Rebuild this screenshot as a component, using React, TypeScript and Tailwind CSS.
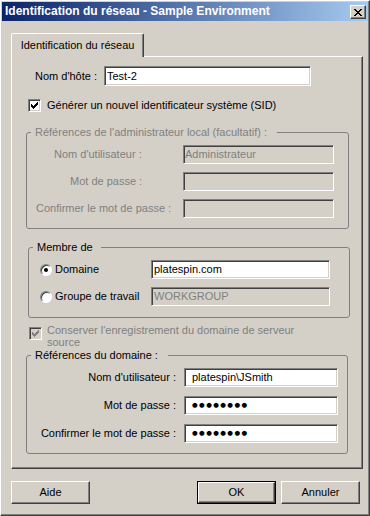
import React from "react";

function Field({ className, children, disabled }: { className: string; children?: React.ReactNode; disabled?: boolean }) {
  return (
    <div
      className={`flex items-center h-[19px] border border-t-[#808080] border-l-[#808080] border-b-white border-r-white shadow-[inset_1px_1px_0_#404040,inset_-1px_-1px_0_#d4d0c8] whitespace-nowrap overflow-hidden ${
        disabled ? "bg-[#d4d0c8] text-[#808080]" : "bg-white text-black"
      } ${className}`}
    >
      {children}
    </div>
  );
}

function Dots() {
  return <span className="font-['DejaVu_Sans',sans-serif] text-[6.5px] tracking-[1.4px] leading-[13px]">●●●●●●●●</span>;
}

function Check({ disabled }: { disabled?: boolean }) {
  return (
    <div
      className={`w-[13px] h-[13px] shrink-0 border border-t-[#808080] border-l-[#808080] border-b-white border-r-white shadow-[inset_1px_1px_0_#404040,inset_-1px_-1px_0_#d4d0c8] flex items-center justify-center ${
        disabled ? "bg-[#d4d0c8]" : "bg-white"
      }`}
    >
      <svg width="7" height="7" viewBox="0 0 7 7" shapeRendering="crispEdges">
        <path
          d="M6 0h1v1H6z M5 1h2v1H5z M0 2h1v1H0z M4 2h3v1H4z M0 3h2v1H0z M3 3h3v1H3z M0 4h5v1H0z M1 5h3v1H1z M2 6h1v1H2z"
          fill={disabled ? "#808080" : "#000"}
        />
      </svg>
    </div>
  );
}

function Radio({ checked }: { checked?: boolean }) {
  return (
    <div className="w-[12px] h-[12px] shrink-0 rounded-full bg-white border border-t-[#808080] border-l-[#808080] border-b-white border-r-white shadow-[inset_1px_1px_0_#404040] flex items-center justify-center">
      {checked && <div className="w-[4px] h-[4px] rounded-full bg-black" />}
    </div>
  );
}

function Btn({ children, def, className }: { children: React.ReactNode; def?: boolean; className: string }) {
  if (def) {
    return (
      <div className={`w-[79px] h-[23px] border border-black flex ${className}`}>
        <div className="flex-1 flex items-center justify-center border border-t-white border-l-white border-b-[#404040] border-r-[#404040] shadow-[inset_-1px_-1px_0_#808080]">
          {children}
        </div>
      </div>
    );
  }
  return (
    <div
      className={`w-[79px] h-[23px] flex items-center justify-center border border-t-white border-l-white border-b-[#404040] border-r-[#404040] shadow-[inset_-1px_-1px_0_#808080] ${className}`}
    >
      {children}
    </div>
  );
}

export default function App() {
  return (
    <div className="w-[370px] h-[516px] bg-[#d4d0c8] border-t border-l border-t-white border-l-white border-r border-b border-r-[#404040] border-b-[#404040] shadow-[inset_-1px_-1px_0_#808080] p-[1px] flex flex-col font-['Liberation_Sans',Arial,sans-serif] text-[11px] leading-[13px] text-black overflow-hidden">
      {/* Title bar */}
      <div className="h-[19px] shrink-0 flex items-start bg-[linear-gradient(to_right,#0a246a,#a6caf0)] pl-[3px] pr-[2px]">
        <span className="flex-1 text-white font-bold text-[12px] leading-[19px] whitespace-nowrap">
          Identification du réseau - Sample Environment
        </span>
        <div className="mt-[3px] w-[16px] h-[14px] bg-[#d4d0c8] flex items-center justify-center border border-t-white border-l-white border-b-[#404040] border-r-[#404040] shadow-[inset_-1px_-1px_0_#808080]">
          <svg width="8" height="7" viewBox="0 0 8 7" shapeRendering="crispEdges">
            <path
              d="M0 0h2v1H0z M6 0h2v1H6z M1 1h2v1H1z M5 1h2v1H5z M2 2h4v1H2z M3 3h2v1H3z M2 4h4v1H2z M1 5h2v1H1z M5 5h2v1H5z M0 6h2v1H0z M6 6h2v1H6z"
              fill="#000"
            />
          </svg>
        </div>
      </div>

      {/* Tab */}
      <div className="mt-[12px] ml-[9px] flex">
        <div className="relative z-10 -mb-[1px] w-[133px] h-[24px] bg-[#d4d0c8] border-t border-l border-t-white border-l-white border-r border-r-[#404040] shadow-[inset_-1px_0_0_#808080] rounded-tl-[2px] rounded-tr-[2px] flex items-center justify-center pb-[1px]">
          Identification du réseau
        </div>
      </div>

      {/* Panel */}
      <div className="ml-[9px] w-[352px] h-[413px] shrink-0 border-t border-l border-t-white border-l-white border-r border-b border-r-[#404040] border-b-[#404040] shadow-[inset_-1px_-1px_0_#808080] flex flex-col">
        {/* Hostname */}
        <div className="mt-[9px] flex items-center">
          <span className="ml-[23px] w-[69px]">Nom d'hôte :</span>
          <Field className="w-[207px] h-[20px] pl-[2px]">Test-2</Field>
        </div>

        {/* SID */}
        <div className="mt-[13px] ml-[16px] flex items-center">
          <Check />
          <span className="ml-[6px]">Générer un nouvel identificateur système (SID)</span>
        </div>

        {/* Admin group */}
        <fieldset className="mt-[14px] ml-[14px] w-[323px] border border-[#808080] rounded-[3px] pb-[10px] p-0">
          <legend className="ml-[4px] pl-[4px] pr-[10px] leading-[13px] text-[#808080]">
            Références de l'administrateur local (facultatif) :
          </legend>
          <div className="mt-[6px] flex flex-col gap-[8px] text-[#808080]">
            <div className="flex items-center">
              <span className="w-[156px] pl-[27px]">Nom d'utilisateur :</span>
              <Field disabled className="w-[151px] pl-[1px]">Administrateur</Field>
            </div>
            <div className="flex items-center">
              <span className="w-[156px] pl-[43px]">Mot de passe :</span>
              <Field disabled className="w-[151px]" />
            </div>
            <div className="flex items-center">
              <span className="w-[156px] pl-[9px]">Confirmer le mot de passe :</span>
              <Field disabled className="w-[151px]" />
            </div>
          </div>
        </fieldset>

        {/* Membre de */}
        <fieldset className="mt-[12px] ml-[16px] w-[322px] border border-[#808080] rounded-[3px] p-0 pb-[11px]">
          <legend className="ml-[4px] pl-[4px] pr-[8px] leading-[13px]">Membre de</legend>
          <div className="mt-[6px] flex flex-col gap-[8px]">
            <div className="flex items-center">
              <div className="w-[122px] pl-[11px] flex items-center">
                <Radio checked />
                <span className="ml-[3px]">Domaine</span>
              </div>
              <Field className="w-[179px] pl-[2px]">platespin.com</Field>
            </div>
            <div className="flex items-center">
              <div className="w-[122px] pl-[11px] flex items-center">
                <Radio />
                <span className="ml-[3px]">Groupe de travail</span>
              </div>
              <Field disabled className="w-[179px] pl-[2px]">WORKGROUP</Field>
            </div>
          </div>
        </fieldset>

        {/* Conserver */}
        <div className="mt-[6px] ml-[17px] flex items-start">
          <div className="mt-[3px]">
            <Check disabled />
          </div>
          <span className="ml-[5px] leading-[12px] text-[#808080]">
            Conserver l'enregistrement du domaine de serveur
            <br />
            source
          </span>
        </div>

        {/* Domain credentials */}
        <fieldset className="mt-[1px] ml-[14px] w-[322px] border border-[#808080] rounded-[3px] p-0 pb-[10px]">
          <legend className="ml-[4px] pl-[4px] pr-[10px] leading-[13px]">Références du domaine :</legend>
          <div className="mt-[6px] flex flex-col gap-[9px]">
            <div className="flex items-center">
              <span className="w-[149px] text-right">Nom d'utilisateur :</span>
              <Field className="ml-[8px] w-[154px] pl-[7px]">platespin\JSmith</Field>
            </div>
            <div className="flex items-center">
              <span className="w-[149px] text-right">Mot de passe :</span>
              <Field className="ml-[8px] w-[154px] pl-[7px]">
                <Dots />
              </Field>
            </div>
            <div className="flex items-center">
              <span className="w-[149px] text-right">Confirmer le mot de passe :</span>
              <Field className="ml-[8px] w-[154px] pl-[7px]">
                <Dots />
              </Field>
            </div>
          </div>
        </fieldset>
      </div>

      {/* Buttons */}
      <div className="mt-[12px] flex">
        <Btn className="ml-[9px]">Aide</Btn>
        <Btn def className="ml-[107px]">
          OK
        </Btn>
        <Btn className="ml-[5px]">Annuler</Btn>
      </div>
    </div>
  );
}
